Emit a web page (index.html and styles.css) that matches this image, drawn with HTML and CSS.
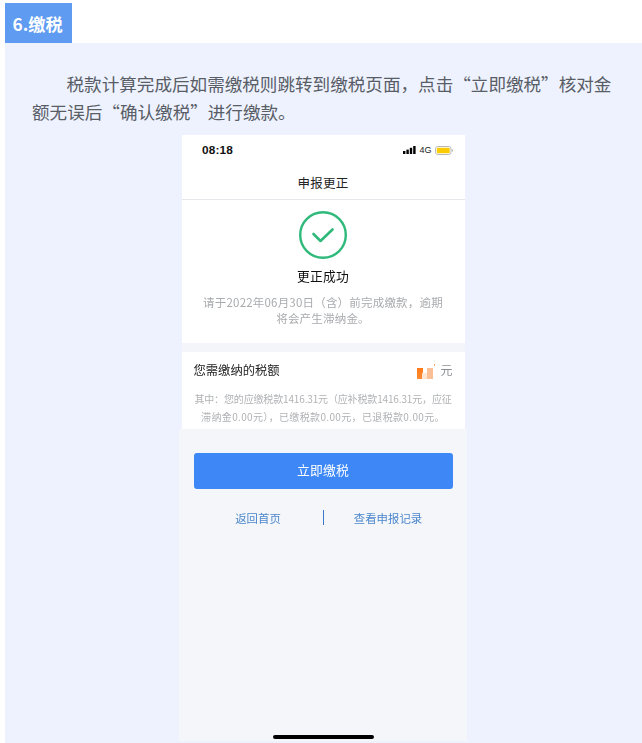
FILE: index.html
```html
<!DOCTYPE html>
<html lang="zh-CN">
<head>
<meta charset="utf-8">
<title>缴税</title>
<link rel="stylesheet" href="styles.css">
</head>
<body>
<h2 class="section-tag">6.缴税</h2>
<section class="panel">
  <p class="intro">税款计算完成后如需缴税则跳转到缴税页面，点击“立即缴税”核对金额无误后“确认缴税”进行缴款。</p>
  <div class="phone">
    <div class="upper">
      <div class="card result-card">
        <div class="status">
          <span class="time">08:18</span>
          <span class="status-icons">
            <svg class="signal" width="13" height="8" viewBox="0 0 13 8"><rect x="0" y="5" width="2.4" height="3"/><rect x="3.4" y="3.6" width="2.4" height="4.4"/><rect x="6.8" y="1.8" width="2.4" height="6.2"/><rect x="10.2" y="0" width="2.4" height="8"/></svg>
            <span class="net">4G</span>
            <svg class="battery" width="18" height="9" viewBox="0 0 18 9"><rect x="0.5" y="0.5" width="15.5" height="8" rx="2.2" fill="#fff" stroke="#b9b9b9"/><rect x="1.8" y="1.8" width="12.9" height="5.4" rx="1" fill="#fbcb05"/><path d="M17 3v3c.6-.2 1-.8 1-1.5S17.600 3.200 17 3z" fill="#b9b9b9"/></svg>
          </span>
        </div>
        <div class="nav-title">申报更正</div>
        <svg class="check" width="48" height="48" viewBox="0 0 48 48"><circle cx="24" cy="24" r="22.800" fill="none" stroke="#2fb97a" stroke-width="2.400"/><path d="M14.500 23l7 7 12-11.500" fill="none" stroke="#2fb97a" stroke-width="2.600" stroke-linecap="round" stroke-linejoin="round"/></svg>
        <div class="result-title">更正成功</div>
        <p class="result-desc">请于2022年06月30日（含）前完成缴款，逾期<br>将会产生滞纳金。</p>
      </div>
      <div class="card tax-card">
        <div class="tax-head">
          <span>您需缴纳的税额</span>
          <span class="tax-amount"><span class="mosaic"><i class="m1"></i><i class="m2"></i><i class="m3"></i><i class="m4"></i></span><span class="unit">元</span></span>
        </div>
        <p class="tax-desc">其中：您的应缴税款1416.31元（应补税款1416.31元，应征<br><span class="tax-line2">滞纳金0.00元），已缴税款0.00元，已退税款0.00元。</span></p>
      </div>
    </div>
    <div class="lower">
      <div class="pay-btn">立即缴税</div>
      <div class="links">
        <span>返回首页</span>
        <i class="divider"></i>
        <span>查看申报记录</span>
      </div>
      <div class="home-bar"></div>
    </div>
  </div>
</section>
</body>
</html>
```
FILE: styles.css
```css
* { box-sizing: border-box; }
html, body { margin: 0; height: 743px; overflow: hidden; background: #fff; }
body { font-family: "Noto Sans CJK SC", "Liberation Sans", sans-serif; }
.section-tag {
  width: 67px; height: 40px; margin: 3px 0 0 5px; padding-left: 7.500px;
  background: #5f9cf1; color: #fff; font-size: 17.200px; font-weight: 700;
  line-height: 42px; white-space: nowrap;
}
.panel {
  height: 700px; margin-left: 5px; padding-top: 27px; background: #eef2fe;
  display: flex; flex-direction: column; align-items: center;
}
.intro {
  align-self: stretch; margin: 0; padding: 0 21px 0 27px;
  font-size: 17.580px; line-height: 28px; text-indent: 34.500px; color: #585d66;
}
.phone {
  width: 288px; height: 606px; margin: 9px 2px 0 0;
  display: flex; flex-direction: column; filter: blur(.3px);
}
.upper { margin: 0 2px 0 3px; background: #f3f5fa; display: flex; flex-direction: column; gap: 9px; }
.card { background: #fff; }
.result-card { display: flex; flex-direction: column; align-items: center; padding-bottom: 17px; }
.status { align-self: stretch; height: 32px; display: flex; align-items: center; justify-content: space-between; padding: 0 12px 2px 20.500px; }
.time { font: 700 11.800px "Liberation Sans", sans-serif; color: #111; letter-spacing: .15px; }
.status-icons { display: flex; align-items: center; gap: 3px; }
.net { font: 9px "Liberation Sans", sans-serif; color: #222; }
.nav-title {
  align-self: stretch; height: 33px; border-bottom: 1px solid #e6e7ea;
  text-align: center; font-size: 12.500px; line-height: 32px; color: #222; letter-spacing: .2px;
}
.check { margin-top: 11px; }
.result-title { margin-top: 8px; font-size: 12.800px; line-height: 18px; color: #111; letter-spacing: .2px; }
.result-desc { margin: 9px 0 0; font-size: 11.500px; line-height: 16px; color: #a9abae; text-align: center; letter-spacing: .2px; white-space: nowrap; }
.tax-card { height: 77px; padding: 9px 12px 0; }
.tax-head { display: flex; justify-content: space-between; font-size: 12.300px; line-height: 18px; color: #222; }
.tax-amount { display: flex; align-items: center; gap: 5px; }
.mosaic { width: 18px; height: 14px; position: relative; display: block; margin-top: 3px; }
.mosaic i { position: absolute; display: block; }
.m1 { left: 0; top: 3px; width: 5.500px; height: 11px; background: linear-gradient(#ff7a1a, #ff8b33); }
.m2 { left: 5px; top: 8px; width: 6px; height: 6px; background: #ffe6d2; }
.m3 { left: 10px; top: 3px; width: 6px; height: 11px; background: #fbbf95; }
.m4 { left: 17px; top: -1px; width: 1px; height: 2px; background: #f6a25e; }
.unit { color: #8d8f92; font-size: 12px; }
.tax-desc { margin: 11px 0 0; font-size: 10px; line-height: 18px; color: #b0b2b5; text-align: center; letter-spacing: -.15px; white-space: nowrap; }
.tax-line2 { letter-spacing: .35px; }
.lower { flex: 1; background: #f4f6fa; display: flex; flex-direction: column; padding: 24px 14px 2px 15px; }
.pay-btn { height: 36px; border-radius: 3px; background: #3e87f6; color: #fff; text-align: center; font-size: 12.800px; line-height: 34px; letter-spacing: .2px; }
.links { margin-top: 20px; height: 18px; display: grid; grid-template-columns: 1fr 1px 1fr; align-items: center; text-align: center; font-size: 11.400px; line-height: 18px; color: #4b87cb; }
.divider { display: block; width: 1px; height: 15px; margin-bottom: 2px; background: #3a78c8; }
.home-bar { width: 101px; height: 4px; margin: auto 0 0 79px; border-radius: 2px; background: #000; }
```
